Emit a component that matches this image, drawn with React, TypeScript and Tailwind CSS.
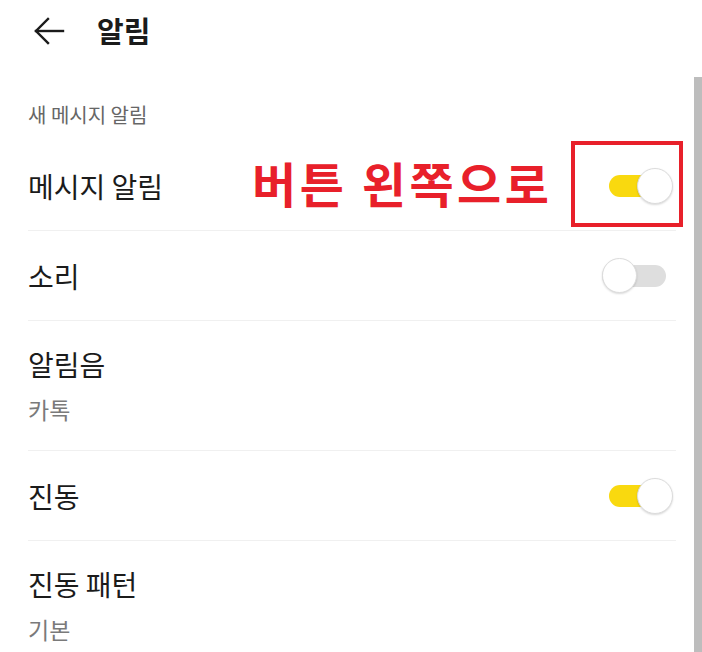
import React from "react"

function Toggle({ on }: { on: boolean }) {
  return (
    <div className="relative w-[71px] h-[36px] shrink-0">
      {on ? (
        <>
          <div className="absolute left-[7px] right-[14px] top-[7px] h-[22px] rounded-full bg-[#f9d90f]" />
          <div className="absolute right-0 top-0 w-[36px] h-[36px] rounded-full bg-white border border-[#dcdcdc] shadow-[0_1px_2px_rgba(0,0,0,0.15)]" />
        </>
      ) : (
        <>
          <div className="absolute left-0 right-[7px] top-[7px] h-[22px] rounded-full bg-[#dedede]" />
          <div className="absolute left-0 top-0 w-[35px] h-[35px] rounded-full bg-white border border-[#dcdcdc] shadow-[0_1px_2px_rgba(0,0,0,0.15)]" />
        </>
      )}
    </div>
  )
}

function Row({
  title,
  sub,
  toggle,
  last,
}: {
  title: string
  sub?: string
  toggle?: boolean
  last?: boolean
}) {
  return (
    <div
      className={`flex justify-between ${sub ? "h-[130px] items-start pt-[25px]" : "h-[90px] items-center"} ${last ? "" : "border-b border-[#f0f0f0]"}`}
    >
      <div className="flex flex-col">
        <span className="text-[28px] text-[#1b1b1b] leading-[36px]">{title}</span>
        {sub && <span className="text-[23px] text-[#7a7a7a] leading-[30px] mt-[12px]">{sub}</span>}
      </div>
      {toggle !== undefined && (
        <div className="mr-[3px]">
          <Toggle on={toggle} />
        </div>
      )}
    </div>
  )
}

export default function App() {
  return (
    <div
      className="relative w-[702px] h-[652px] overflow-hidden bg-white"
      style={{ fontFamily: '"Noto Sans CJK KR", "Noto Sans", sans-serif' }}
    >
      {/* Header */}
      <div className="flex items-center h-[62px] pl-[33px]">
        <svg width="32" height="30" viewBox="0 0 32 30" fill="none" stroke="#1b1b1b" strokeWidth="2.4" strokeLinecap="square">
          <path d="M3 15h27" />
          <path d="M15 3L3 15l12 12" />
        </svg>
        <span className="ml-[32px] text-[29px] font-bold text-[#1b1b1b]">알림</span>
      </div>

      <div className="pl-[28px] pr-[26px]">
        <div className="pt-[39px] pb-[12px] text-[20px] text-[#666] leading-[28px]">새 메시지 알림</div>
        <Row title="메시지 알림" toggle={true} />
        <Row title="소리" toggle={false} />
        <Row title="알림음" sub="카톡" />
        <Row title="진동" toggle={true} />
        <Row title="진동 패턴" sub="기본" last />
      </div>

      {/* scrollbar */}
      <div className="absolute right-0 top-[77px] bottom-0 w-[8px] bg-[#bdbdbd]" />

      {/* annotation */}
      <div className="absolute left-[252px] top-[152px] text-[48px] font-bold text-[#e8202a] leading-[60px] tracking-[3.5px]">
        버튼 왼쪽으로
      </div>
      <div className="absolute left-[571px] top-[141px] w-[112px] h-[86px] border-[4px] border-[#e8202a]" />
    </div>
  )
}
